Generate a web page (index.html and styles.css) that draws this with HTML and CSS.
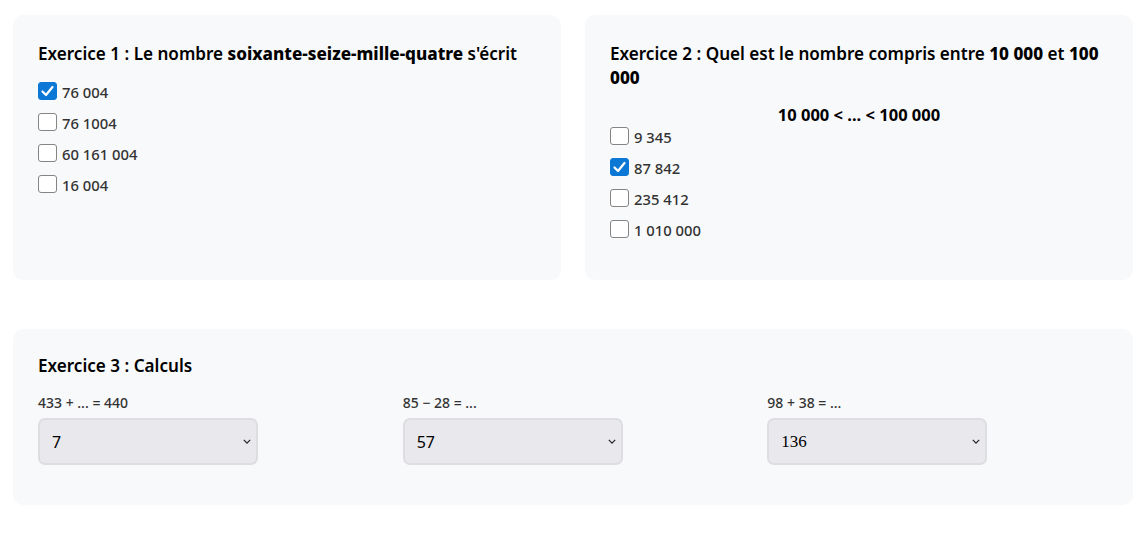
FILE: index.html
```html
<!DOCTYPE html>
<html lang="fr">
<head>
<meta charset="utf-8">
<title>Exercices</title>
<link rel="stylesheet" href="styles.css">
</head>
<body>
<main class="page">
  <div class="top-row">
    <section class="card">
      <h3 class="title">Exercice 1 : Le nombre <strong>soixante-seize-mille-quatre</strong> s'écrit</h3>
      <ul class="options">
        <li class="option"><span class="box checked"><svg viewBox="0 0 19 18" width="19" height="18"><path d="M4.5 9.5 L8 13 L14.5 5" fill="none" stroke="#fff" stroke-width="2.2" stroke-linecap="round" stroke-linejoin="round"/></svg></span><span class="opt-label">76 004</span></li>
        <li class="option"><span class="box"></span><span class="opt-label">76 1004</span></li>
        <li class="option"><span class="box"></span><span class="opt-label">60 161 004</span></li>
        <li class="option"><span class="box"></span><span class="opt-label">16 004</span></li>
      </ul>
    </section>
    <section class="card">
      <h3 class="title">Exercice 2 : Quel est le nombre compris entre <strong>10 000</strong> et <strong>100 000</strong></h3>
      <p class="range">10 000 &lt; ... &lt; 100 000</p>
      <ul class="options tight">
        <li class="option"><span class="box"></span><span class="opt-label">9 345</span></li>
        <li class="option"><span class="box checked"><svg viewBox="0 0 19 18" width="19" height="18"><path d="M4.5 9.5 L8 13 L14.5 5" fill="none" stroke="#fff" stroke-width="2.2" stroke-linecap="round" stroke-linejoin="round"/></svg></span><span class="opt-label">87 842</span></li>
        <li class="option"><span class="box"></span><span class="opt-label">235 412</span></li>
        <li class="option"><span class="box"></span><span class="opt-label">1 010 000</span></li>
      </ul>
    </section>
  </div>
  <section class="card wide">
    <h3 class="title">Exercice 3 : Calculs</h3>
    <div class="calcs">
      <div class="calc">
        <div class="calc-label">433 + ... = 440</div>
        <div class="select-wrap">
          <select class="sel"><option>7</option><option>17</option><option>873</option></select>
          <svg class="chev" viewBox="0 0 10 6" width="8" height="5"><path d="M1 1 L5 5 L9 1" fill="none" stroke="#222" stroke-width="1.5"/></svg>
        </div>
      </div>
      <div class="calc">
        <div class="calc-label">85 − 28 = ...</div>
        <div class="select-wrap">
          <select class="sel"><option>57</option><option>63</option><option>113</option></select>
          <svg class="chev" viewBox="0 0 10 6" width="8" height="5"><path d="M1 1 L5 5 L9 1" fill="none" stroke="#222" stroke-width="1.5"/></svg>
        </div>
      </div>
      <div class="calc">
        <div class="calc-label">98 + 38 = ...</div>
        <div class="select-wrap">
          <select class="sel serif"><option>136</option><option>126</option><option>60</option></select>
          <svg class="chev" viewBox="0 0 10 6" width="8" height="5"><path d="M1 1 L5 5 L9 1" fill="none" stroke="#222" stroke-width="1.5"/></svg>
        </div>
      </div>
    </div>
  </section>
</main>
</body>
</html>
```

FILE: styles.css
```css
html, body {
  margin: 0;
  padding: 0;
  background: #ffffff;
}
body {
  font-family: "Noto Sans", "Open Sans", sans-serif;
  color: #000;
}
.page {
  padding: 15px 13px;
  display: flex;
  flex-direction: column;
  gap: 49px;
}
.top-row {
  display: grid;
  grid-template-columns: 1fr 1fr;
  gap: 24px;
}
.card {
  background: #f8f9fa;
  border-radius: 10px;
  padding: 27px 25px 34px;
}
.card.wide {
  padding: 25px 25px 40px;
}
.title {
  margin: 0;
  font-size: 17.1px;
  line-height: 24px;
  font-weight: 600;
}
.title strong {
  font-weight: 800;
}
.options {
  list-style: none;
  margin: 11px 0 0;
  padding: 0;
}
.options.tight {
  margin-top: 0;
}
.option {
  display: flex;
  align-items: flex-start;
  height: 31px;
}
.box {
  box-sizing: border-box;
  width: 19px;
  height: 18px;
  border: 1px solid #858585;
  border-radius: 3px;
  background: #fff;
  margin-top: 5px;
  margin-right: 5px;
  flex: none;
}
.box.checked {
  background: #0c78d6;
  border-color: #0c78d6;
  position: relative;
}
.box.checked svg {
  position: absolute;
  left: -1px;
  top: -1px;
}
.opt-label {
  font-size: 14.8px;
  line-height: 31px;
  color: #333;
  font-weight: 500;
}
.range {
  margin: 15px 0 -3px;
  text-align: center;
  font-size: 16.5px;
  line-height: 20px;
  font-weight: 700;
}
.calcs {
  display: grid;
  grid-template-columns: repeat(3, 1fr);
  gap: 24px;
  margin-top: 14px;
}
.calc-label {
  font-size: 14px;
  line-height: 22px;
  color: #333;
  font-weight: 500;
  margin-bottom: 4px;
}
.select-wrap {
  position: relative;
  width: 220px;
}
.sel {
  appearance: none;
  -webkit-appearance: none;
  box-sizing: border-box;
  width: 220px;
  height: 47px;
  background: #e9e8ec;
  border: 2px solid #dedde2;
  border-radius: 7px;
  padding: 0 12px;
  font-family: "Noto Sans", "Open Sans", sans-serif;
  font-size: 16px;
  color: #000;
  outline: none;
}
.sel.serif {
  font-family: "Liberation Serif", serif;
  font-size: 17px;
}
.chev {
  position: absolute;
  right: 7px;
  top: 21px;
  pointer-events: none;
}
```
